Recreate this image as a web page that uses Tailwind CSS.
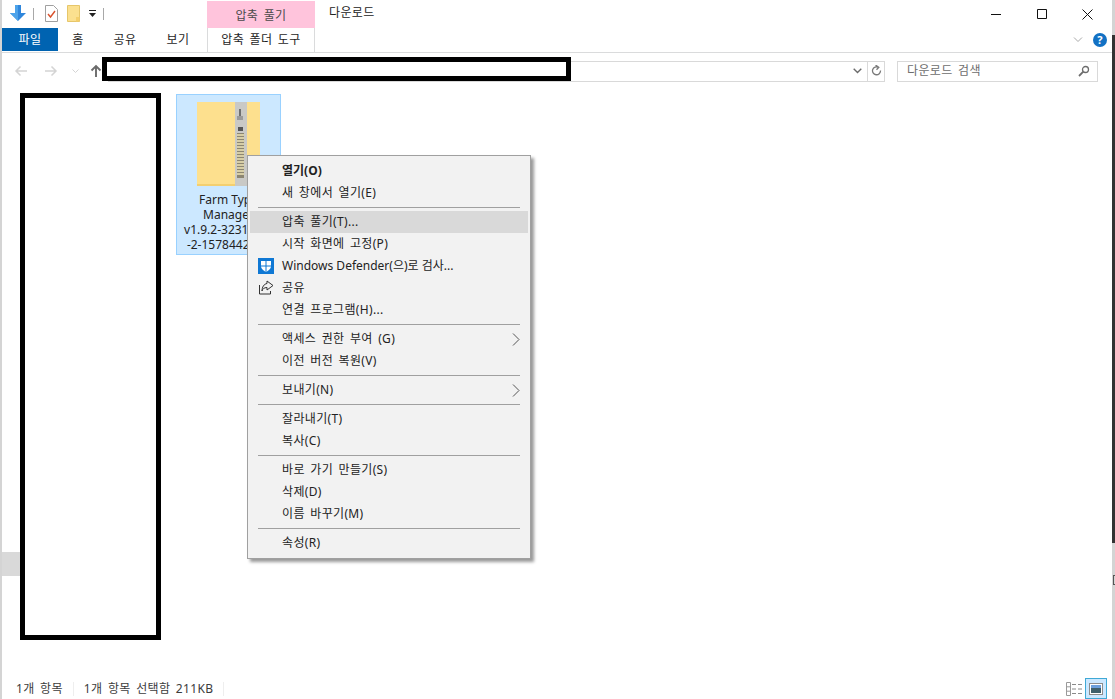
<!DOCTYPE html>
<html lang="ko">
<head>
<meta charset="utf-8">
<title>다운로드</title>
<script src="https://cdn.jsdelivr.net/npm/@tailwindcss/browser@4"></script>
</head>
<body class="h-[699px] w-[1115px] overflow-hidden bg-white font-['Noto_Sans','Noto_Sans_CJK_KR',sans-serif] text-[12px] tracking-[0.35px] text-[#1e1e1e] [word-spacing:2px]">
<div class="relative flex h-[699px] w-[1115px] flex-col border-l-2 border-[#d4d4d4]">

    <!-- title bar -->
    <div class="flex h-[28px] items-start">
        <div class="flex h-[27px] w-[205px] items-center">
            <svg class="ml-[7px] mt-[-2px]" width="18" height="18" viewBox="0 0 18 18"><path d="M6 1h6v8h5l-8 8-8-8h5z" fill="#2f86dc"/><path d="M6 1h3v16L1 9h5z" fill="#4da3ea"/></svg>
            <div class="ml-[6px] h-[12px] w-px bg-[#a8a8a8]"></div>
            <svg class="ml-[11px]" width="13" height="17" viewBox="0 0 13 17"><path d="M.5.5h8l4 4v12H.5z" fill="#fff" stroke="#a0a0a0"/><path d="M3 9l2.500 3 4.500-6" fill="none" stroke="#d9512c" stroke-width="1.400"/></svg>
            <svg class="ml-[9px]" width="13" height="17" viewBox="0 0 13 17"><path d="M.5.500h12v16H.5z" fill="#fbe08f" stroke="#e6c66a"/><path d="M9 12h3.500v4.500H9z" fill="#f4cf6c"/></svg>
            <svg class="ml-[8px]" width="9" height="9" viewBox="0 0 9 9"><path d="M1 1h7v1H1zM1 4h7L4.500 8z" fill="#222"/></svg>
            <div class="ml-[6px] h-[12px] w-px bg-[#a8a8a8]"></div>
        </div>
        <div class="mt-[1px] flex h-[27px] w-[108px] items-center justify-center bg-[#ffc4dc] pt-[2px] text-[#4a4a4a]">압축 풀기</div>
        <div class="ml-[14px] mt-[4px] text-[#222]">다운로드</div>
        <div class="ml-auto flex h-[27px]">
            <div class="flex w-[46px] items-center justify-center pt-[1px]"><svg width="10" height="10" viewBox="0 0 10 10"><path d="M0 5.500h10" stroke="#111"/></svg></div>
            <div class="flex w-[45px] items-center justify-center pt-[1px]"><svg width="10" height="10" viewBox="0 0 10 10"><path d="M.5.500h9v9h-9z" fill="none" stroke="#111"/></svg></div>
            <div class="flex w-[46px] items-center justify-center pt-[1px]"><svg width="11" height="11" viewBox="0 0 11 11"><path d="M.5.500l10 10M10.500.500l-10 10" stroke="#111"/></svg></div>
            <div class="w-[5px]"></div>
        </div>
    </div>

    <!-- ribbon tabs -->
    <div class="flex h-[25px] items-start border-b border-[#dadbdc]">
        <div class="flex h-[23px] w-[56px] items-center justify-center bg-[#0063b1] text-white">파일</div>
        <div class="flex h-[23px] w-[40px] items-center justify-center">홈</div>
        <div class="flex h-[23px] w-[54px] items-center justify-center">공유</div>
        <div class="flex h-[23px] w-[52px] items-center justify-center">보기</div>
        <div class="ml-[3px] flex h-[24px] w-[108px] items-center justify-center border-x border-[#dadbdc] bg-white">압축 폴더 도구</div>
        <div class="ml-auto flex h-[23px] items-center pr-[8px]">
            <svg width="10" height="6" viewBox="0 0 10 6"><path d="M1 .5l4 4 4-4" fill="none" stroke="#a8a8a8"/></svg>
            <div class="ml-[10px] flex h-[14px] w-[14px] items-center justify-center rounded-full bg-[#1271c4] text-[11px] font-bold leading-none text-white">?</div>
        </div>
    </div>

    <!-- address row -->
    <div class="flex h-[36px] items-center">
        <svg class="ml-[12px]" width="14" height="12" viewBox="0 0 14 12"><path d="M13 6H2M6.500 1.500L2 6l4.500 4.500" fill="none" stroke="#d4d4d4" stroke-width="1.500"/></svg>
        <svg class="ml-[16px]" width="14" height="12" viewBox="0 0 14 12"><path d="M1 6h11M7.500 1.500L12 6l-4.500 4.500" fill="none" stroke="#d4d4d4" stroke-width="1.500"/></svg>
        <svg class="ml-[14px]" width="7" height="5" viewBox="0 0 7 5"><path d="M.5.500l3 3 3-3" fill="none" stroke="#d4d4d4"/></svg>
        <svg class="ml-[11px]" width="12" height="14" viewBox="0 0 12 14"><path d="M6 13V2M1.500 6.500L6 2l4.500 4.500" fill="none" stroke="#6b6b6b" stroke-width="1.900"/></svg>
        <div class="ml-[6px] flex h-[21px] w-[777px] items-center justify-end border border-[#d9d9d9]">
            <svg class="mr-[5px]" width="9" height="6" viewBox="0 0 9 6"><path d="M.7.700l3.800 3.800L8.300.700" fill="none" stroke="#6b6b6b" stroke-width="1.400"/></svg>
            <div class="flex h-[19px] w-[17px] items-center justify-center border-l border-[#d9d9d9]">
                <svg width="11" height="12" viewBox="0 0 11 12"><path d="M9.500 5.500a4 4 0 1 1-2-3.200M4.500 0l3.300 2.300-2.300 2.500" fill="none" stroke="#7a7a7a" stroke-width="1.300"/></svg>
            </div>
        </div>
        <div class="ml-[12px] flex h-[21px] w-[201px] items-center justify-between border border-[#d9d9d9] pl-[9px] pr-[7px] text-[#6d6d6d]">
            <span>다운로드 검색</span>
            <svg width="12" height="12" viewBox="0 0 12 12"><circle cx="7.500" cy="4.500" r="3" fill="none" stroke="#6d6d6d" stroke-width="1.300"/><path d="M5.300 6.700L1 11" stroke="#6d6d6d" stroke-width="1.800"/></svg>
        </div>
    </div>

    <!-- content -->
    <div class="flex min-h-0 flex-1">
        <div class="flex w-[174px] flex-col">
            <div class="mt-[463px] h-[24px] w-[18px] bg-[#d9d9d9]"></div>
        </div>
        <div class="mt-[5px] flex h-[161px] w-[105px] flex-col items-center overflow-hidden border border-[#99d1ff] bg-[#cce8ff] leading-[15px]">
            <svg class="mt-[7px] shrink-0" width="64" height="84" viewBox="0 0 64 84">
                <rect x="0" y="0" width="63" height="84" fill="#fde08e"/>
                <rect x="0" y="82" width="63" height="2" fill="#f3cf70"/>
                <rect x="38" y="0" width="12" height="84" fill="#c9c9c6"/>
                <rect x="40" y="31" width="7" height="45" fill="#8c8672"/>
                <path d="M40 33h7M40 36h7M40 39h7M40 42h7M40 45h7M40 48h7M40 51h7M40 54h7M40 57h7M40 60h7M40 63h7M40 66h7M40 69h7M40 72h7" stroke="#efe6b8" stroke-width="1.300"/>
                <rect x="42" y="7" width="2" height="7" fill="#6e6e6e"/>
                <rect x="40" y="14" width="6" height="4" fill="#9a9a9a"/>
                <rect x="41" y="25" width="5" height="4" fill="#555555"/>
            </svg>
            <div class="mt-[6px] w-full whitespace-nowrap text-center tracking-normal text-[#222] [word-spacing:0]">Farm Type<br>Manager<br>v1.9.2-3231-166<br>-2-1578442351</div>
        </div>
    </div>

    <!-- status bar -->
    <div class="flex h-[24px] items-center text-[#3c3c3c]">
        <span class="ml-[14px] mt-[4px]">1개 항목</span>
        <div class="ml-[10px] mt-[4px] h-[14px] w-px bg-[#eeeeee]"></div>
        <span class="ml-[10px] mt-[4px]">1개 항목 선택함 211KB</span>
        <div class="ml-[10px] mt-[4px] h-[14px] w-px bg-[#eeeeee]"></div>
        <div class="ml-auto mr-[8px] mt-[3px] flex items-center">
            <svg width="17" height="14" viewBox="0 0 17 14"><path d="M.5.500h4v13h-4zM.5 4.800h4M.5 9.200h4" fill="none" stroke="#9a9a9a"/><path d="M6 2.500h4M12 2.500h4M6 7h4M12 7h4M6 11.500h4M12 11.500h4" stroke="#8a8a8a"/></svg>
            <div class="ml-[2px] flex h-[21px] w-[22px] items-center justify-center border border-[#3fa9d6] bg-[#cce8ff]">
                <svg width="14" height="12" viewBox="0 0 14 12"><rect x=".5" y=".5" width="13" height="11" fill="#fff" stroke="#8c8c8c"/><rect x="2" y="2" width="10" height="3" fill="#6c9fdc"/><rect x="2" y="5" width="10" height="5" fill="#3f5f6a"/></svg>
            </div>
        </div>
    </div>

    <!-- redaction boxes drawn over the screenshot -->
    <div class="absolute left-[100px] top-[57px] h-[24px] w-[469px] border-[5px] border-black bg-white"></div>
    <div class="absolute left-[18px] top-[93px] h-[547px] w-[141px] border-[5px] border-black bg-white"></div>

    <!-- right edge -->
    <div class="absolute right-0 top-0 h-[699px] w-[3px] bg-[#d4d4d4]"></div>
    <div class="absolute right-0 top-[35px] h-[508px] w-[3px] bg-[#333333]"></div>
    <div class="absolute right-0 top-[575px] h-[10px] w-[2px] border-y border-l border-[#555555]"></div>

    <!-- context menu -->
    <div class="absolute left-[245px] top-[155px] w-[284px] border border-[#a0a0a0] bg-[#f2f2f2] pb-[4px] pl-[2px] pr-[2px] pt-[4px] text-[#222] shadow-[3px_3px_3px_rgba(0,0,0,0.4)]">
        <div class="flex h-[22px] items-center pl-[32px] font-bold tracking-normal">열기(O)</div>
        <div class="flex h-[22px] items-center pl-[32px]">새 창에서 열기(E)</div>
        <div class="flex h-[7px] items-center px-[8px]"><div class="h-px w-full bg-[#a0a0a0]"></div></div>
        <div class="flex h-[22px] items-center bg-[#d9d9d9] pl-[32px]">압축 풀기(T)...</div>
        <div class="flex h-[22px] items-center pl-[32px]">시작 화면에 고정(P)</div>
        <div class="relative flex h-[22px] items-center pl-[32px] tracking-normal [word-spacing:0]">
            <svg class="absolute left-[8px] top-[3px]" width="16" height="16" viewBox="0 0 16 16"><rect width="16" height="16" fill="#0f78d4"/><path d="M3 3h10v5c0 3-2.500 4.500-5 6-2.500-1.500-5-3-5-6z" fill="#fff"/><path d="M7.500 3h1v11h-1zM3 7.500h10v1H3z" fill="#0f78d4"/></svg>
            Windows Defender(으)로 검사...
        </div>
        <div class="relative flex h-[22px] items-center pl-[32px]">
            <svg class="absolute left-[9px] top-[3px]" width="15" height="15" viewBox="0 0 15 15"><path d="M8 1l6 4.500L8 10V7.500C5 7.500 3.500 9 3 11 3 7 5 4 8 3.500z" fill="none" stroke="#333"/><path d="M.5 5v9h11v-3" fill="none" stroke="#333"/></svg>
            공유
        </div>
        <div class="flex h-[22px] items-center pl-[32px]">연결 프로그램(H)...</div>
        <div class="flex h-[7px] items-center px-[8px]"><div class="h-px w-full bg-[#a0a0a0]"></div></div>
        <div class="flex h-[22px] items-center justify-between pl-[32px] pr-[8px]">
            <span>액세스 권한 부여 (G)</span>
            <svg width="8" height="13" viewBox="0 0 8 13"><path d="M1 .5l6 6-6 6" fill="none" stroke="#555"/></svg>
        </div>
        <div class="flex h-[22px] items-center pl-[32px]">이전 버전 복원(V)</div>
        <div class="flex h-[7px] items-center px-[8px]"><div class="h-px w-full bg-[#a0a0a0]"></div></div>
        <div class="flex h-[22px] items-center justify-between pl-[32px] pr-[8px]">
            <span>보내기(N)</span>
            <svg width="8" height="13" viewBox="0 0 8 13"><path d="M1 .5l6 6-6 6" fill="none" stroke="#555"/></svg>
        </div>
        <div class="flex h-[7px] items-center px-[8px]"><div class="h-px w-full bg-[#a0a0a0]"></div></div>
        <div class="flex h-[22px] items-center pl-[32px]">잘라내기(T)</div>
        <div class="flex h-[22px] items-center pl-[32px]">복사(C)</div>
        <div class="flex h-[7px] items-center px-[8px]"><div class="h-px w-full bg-[#a0a0a0]"></div></div>
        <div class="flex h-[22px] items-center pl-[32px]">바로 가기 만들기(S)</div>
        <div class="flex h-[22px] items-center pl-[32px]">삭제(D)</div>
        <div class="flex h-[22px] items-center pl-[32px]">이름 바꾸기(M)</div>
        <div class="flex h-[7px] items-center px-[8px]"><div class="h-px w-full bg-[#a0a0a0]"></div></div>
        <div class="flex h-[22px] items-center pl-[32px]">속성(R)</div>
    </div>
</div>
</body>
</html>
